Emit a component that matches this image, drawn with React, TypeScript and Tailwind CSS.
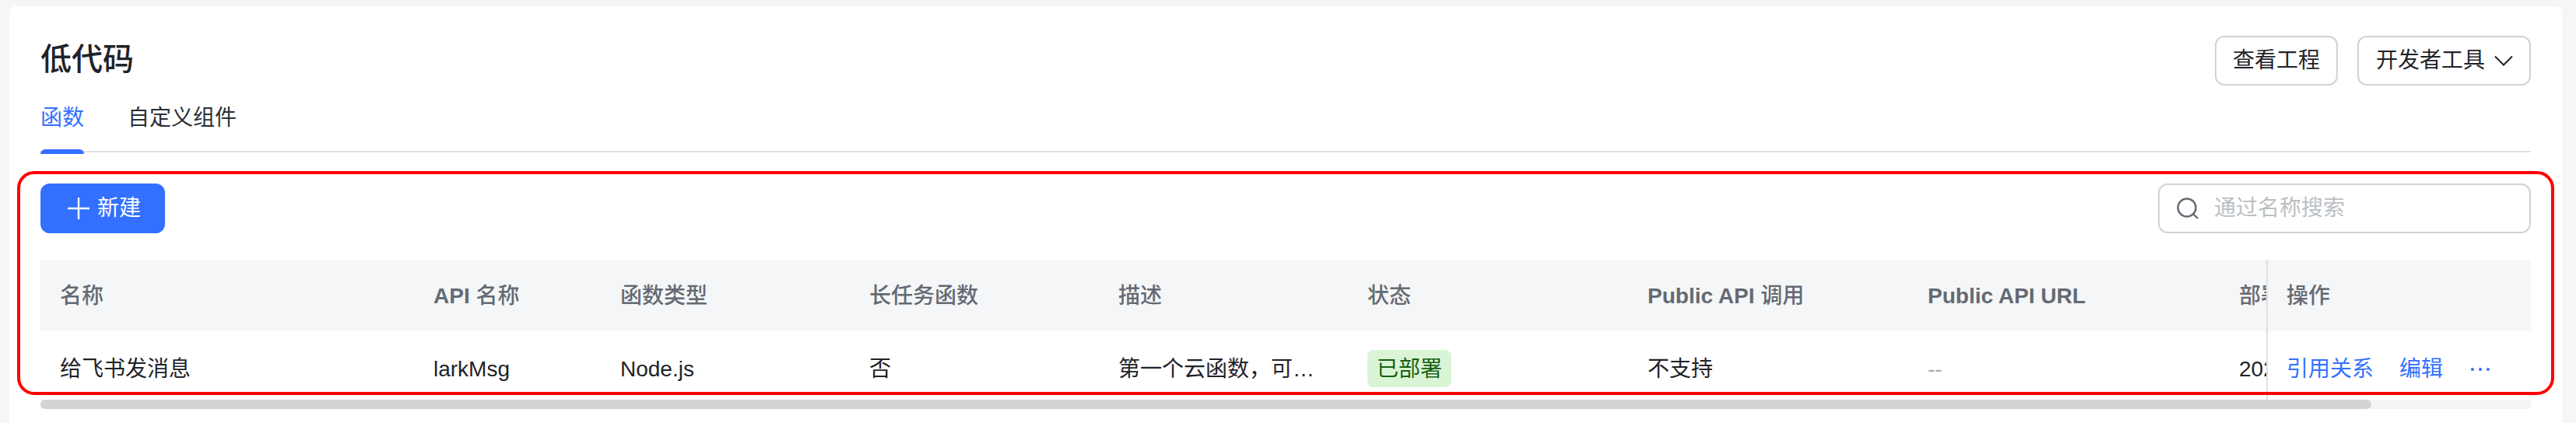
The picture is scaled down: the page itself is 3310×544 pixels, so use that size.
import type { ReactNode } from "react";

const FONT = "font-['Liberation_Sans','Noto_Sans_CJK_SC',sans-serif]";
const GRID = "grid grid-cols-[480px_240px_320px_320px_320px_360px_360px_400px_320px] w-max";

const headers: [string, string][] = [
  ["", "名称"],
  ["API ", "名称"],
  ["", "函数类型"],
  ["", "长任务函数"],
  ["", "描述"],
  ["", "状态"],
  ["Public API ", "调用"],
  ["Public API URL", ""],
  ["", "部署时间"],
];

function Cell({ children, flush }: { children: ReactNode; flush?: boolean }) {
  return <div className={`flex items-center whitespace-pre pl-[25px] pr-6 min-w-0 ${flush ? "" : "pt-0.5"}`}>{children}</div>;
}

export default function App() {
  return (
    <div className={`h-[544px] overflow-hidden bg-[#f5f6f7] pt-2 pl-3 pr-[18px] text-[28px] text-[#1f2329] ${FONT}`}>
      <div className="h-[600px] rounded-lg bg-white px-10 pt-[38px]">
        {/* Header */}
        <header className="flex h-16 items-start justify-between">
          <h1 className="text-[40px] leading-[60px] font-medium">低代码</h1>
          <div className="flex gap-[25px]">
            <button className="h-16 w-[158px] rounded-xl border-2 border-[#d0d3d6] bg-white leading-10">查看工程</button>
            <button className="flex h-16 w-[223px] items-center gap-3 rounded-xl border-2 border-[#d0d3d6] bg-white pl-[22px] leading-10">
              开发者工具
              <svg width="24" height="14" viewBox="0 0 24 14" fill="none" stroke="currentColor" strokeWidth="2">
                <path d="M1 1.5 12 12.5 23 1.5" />
              </svg>
            </button>
          </div>
        </header>

        {/* Tabs */}
        <nav className="flex h-[86px] gap-14 border-b-2 border-[#dee0e3] pt-[22px] leading-10">
          <div className="relative h-16 text-[#3370ff]">
            函数
            <span className="absolute inset-x-0 -bottom-0.5 h-1.5 rounded-t-md bg-[#3370ff]" />
          </div>
          <div className="text-[#2b2f36]">自定义组件</div>
        </nav>

        <section className="relative mt-10">
          {/* Annotation frame */}
          <div className="pointer-events-none absolute -left-[30px] -right-[30px] -top-4 z-10 h-[288px] rounded-[22px] border-4 border-[#ff0000]" />

          {/* Toolbar */}
          <div className="flex h-16 items-center justify-between">
            <button className="flex h-16 w-40 items-center justify-center gap-2.5 rounded-xl bg-[#3370ff] pl-1 text-white">
              <svg width="28" height="28" viewBox="0 0 28 28" fill="none" stroke="currentColor" strokeWidth="2.4">
                <path d="M14 0v28M0 14h28" />
              </svg>
              新建
            </button>
            <div className="flex h-16 w-[479px] items-center gap-5 rounded-xl border-2 border-[#d0d3d6] pl-[22px]">
              <svg width="28" height="28" viewBox="0 0 28 28" fill="none" stroke="#646a73" strokeWidth="2.4">
                <circle cx="13" cy="13" r="11.5" />
                <path d="M21 21 27 27" />
              </svg>
              <span className="text-[#bbbfc4]">通过名称搜索</span>
            </div>
          </div>

          {/* Table */}
          <div className="mt-[34px] flex h-[180px] overflow-hidden">
            <div className="min-w-0 flex-1 overflow-hidden">
              <div className={`${GRID} h-[92px] bg-[#f5f6f7] font-medium text-[#646a73]`}>
                {headers.map(([latin, cjk]) => (
                  <Cell key={latin + cjk}>
                    {latin && <span className="font-bold">{latin}</span>}
                    {cjk}
                  </Cell>
                ))}
              </div>
              <div className={`${GRID} h-24`}>
                <Cell>给飞书发消息</Cell>
                <Cell>larkMsg</Cell>
                <Cell>Node.js</Cell>
                <Cell>否</Cell>
                <Cell>
                  <span className="block w-[256px] truncate">第一个云函数，可以发送消息</span>
                </Cell>
                <Cell flush>
                  <span className="flex h-12 w-[108px] items-center justify-center rounded-lg bg-[#d9f5d6] pt-0.5 text-[#186010]">已部署</span>
                </Cell>
                <Cell>不支持</Cell>
                <Cell>
                  <span className="text-[#a6a9ae]">--</span>
                </Cell>
                <Cell>2024-01-01 12:00:00</Cell>
              </div>
            </div>
            <div className="w-[340px] shrink-0 border-l-2 border-[#dee0e3]">
              <div className="flex h-[92px] items-center bg-[#f5f6f7] pl-6 pt-0.5 font-medium text-[#646a73]">操作</div>
              <div className="flex h-24 items-center pl-6 pt-0.5 text-[#3370ff]">
                <span>引用关系</span>
                <span className="ml-[33px]">编辑</span>
                <span className="ml-9 flex gap-1.5">
                  <i className="size-1 rounded-full bg-[#3370ff]" />
                  <i className="size-1 rounded-full bg-[#3370ff]" />
                  <i className="size-1 rounded-full bg-[#3370ff]" />
                </span>
              </div>
            </div>
          </div>

          {/* Horizontal scrollbar */}
          <div className="h-3 bg-[#f5f5f5]">
            <div className="h-3 w-[2995px] rounded-md bg-[#d4d4d4]" />
          </div>
        </section>
      </div>
    </div>
  );
}
